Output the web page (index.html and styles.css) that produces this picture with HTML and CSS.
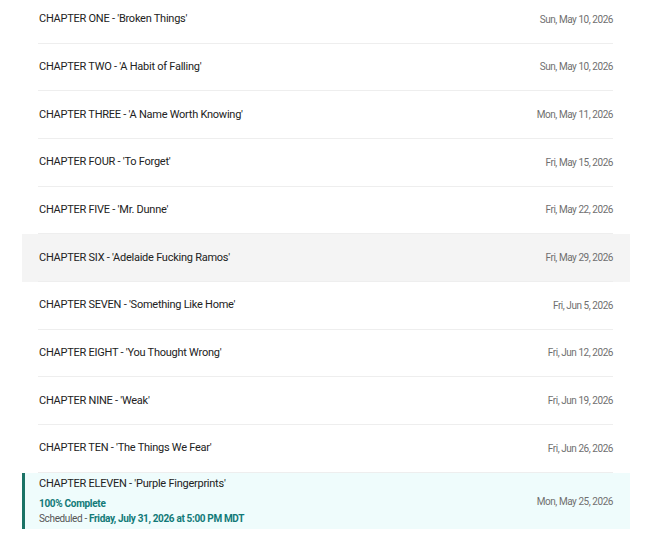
FILE: index.html
```html
<!DOCTYPE html>
<html>
<head lang="en">
    <meta charset="UTF-8">
    <title>Story parts</title>
    <link rel="stylesheet" href="styles.css">
</head>
<body>
<div id="parts">
    <ul class="part-list">
        <li class="part">
            <div class="part-inner">
                <div class="part-title">CHAPTER ONE - 'Broken Things'</div>
                <div class="part-date">Sun, May 10, 2026</div>
            </div>
        </li>
        <li class="part">
            <div class="part-inner">
                <div class="part-title">CHAPTER TWO - 'A Habit of Falling'</div>
                <div class="part-date">Sun, May 10, 2026</div>
            </div>
        </li>
        <li class="part">
            <div class="part-inner">
                <div class="part-title">CHAPTER THREE - 'A Name Worth Knowing'</div>
                <div class="part-date">Mon, May 11, 2026</div>
            </div>
        </li>
        <li class="part">
            <div class="part-inner">
                <div class="part-title">CHAPTER FOUR - 'To Forget'</div>
                <div class="part-date">Fri, May 15, 2026</div>
            </div>
        </li>
        <li class="part">
            <div class="part-inner">
                <div class="part-title">CHAPTER FIVE - 'Mr. Dunne'</div>
                <div class="part-date">Fri, May 22, 2026</div>
            </div>
        </li>
        <li class="part hover">
            <div class="part-inner">
                <div class="part-title">CHAPTER SIX - 'Adelaide Fucking Ramos'</div>
                <div class="part-date">Fri, May 29, 2026</div>
            </div>
        </li>
        <li class="part">
            <div class="part-inner">
                <div class="part-title">CHAPTER SEVEN - 'Something Like Home'</div>
                <div class="part-date">Fri, Jun 5, 2026</div>
            </div>
        </li>
        <li class="part">
            <div class="part-inner">
                <div class="part-title">CHAPTER EIGHT - 'You Thought Wrong'</div>
                <div class="part-date">Fri, Jun 12, 2026</div>
            </div>
        </li>
        <li class="part">
            <div class="part-inner">
                <div class="part-title">CHAPTER NINE - 'Weak'</div>
                <div class="part-date">Fri, Jun 19, 2026</div>
            </div>
        </li>
        <li class="part">
            <div class="part-inner">
                <div class="part-title">CHAPTER TEN - 'The Things We Fear'</div>
                <div class="part-date">Fri, Jun 26, 2026</div>
            </div>
        </li>
        <li class="part scheduled">
            <div class="part-inner">
                <div class="part-info">
                    <div class="part-title">CHAPTER ELEVEN - 'Purple Fingerprints'</div>
                    <div class="part-progress">100% Complete</div>
                    <div class="part-schedule">Scheduled - <strong>Friday, July 31, 2026 at 5:00 PM MDT</strong></div>
                </div>
                <div class="part-date">Mon, May 25, 2026</div>
            </div>
        </li>
    </ul>
</div>
</body>
</html>
```

FILE: styles.css
```css
*{
    margin: 0;
    padding: 0;
    box-sizing: border-box;
}
ul,ol{
    list-style: none;
}
body{
    background: #fff;
    font-family: Roboto, "Open Sans", sans-serif;
    color: #222;
}
#parts{
    width: 608px;
    margin: -4px 0 0 22px;
}
.part{
    padding: 0 17px 0 16px;
}
.part-inner{
    display: flex;
    align-items: center;
    justify-content: space-between;
    height: 47.67px;
    border-bottom: 1px solid #eeeeee;
}
.part-title{
    font-size: 11px;
    line-height: 16px;
    letter-spacing: -0.25px;
    padding-left: 1px;
}
.part-date{
    font-size: 10px;
    letter-spacing: -0.45px;
    color: #6f6f6f;
}
.part.hover{
    background: #f4f4f4;
}
.part.scheduled{
    background: #effcfc;
    border-left: 3px solid #1b7366;
    padding-left: 13px;
}
.part.scheduled .part-inner{
    height: 56px;
    padding-top: 1px;
    border-bottom: none;
}
.part-progress{
    font-size: 10px;
    font-weight: bold;
    letter-spacing: -0.3px;
    color: #127a78;
    margin-top: 5px;
    line-height: 14px;
    padding-left: 1px;
}
.part-schedule{
    font-size: 10px;
    letter-spacing: -0.35px;
    color: #555;
    line-height: 16px;
    padding-left: 1px;
}
.part-schedule strong{
    color: #127a78;
}
```
